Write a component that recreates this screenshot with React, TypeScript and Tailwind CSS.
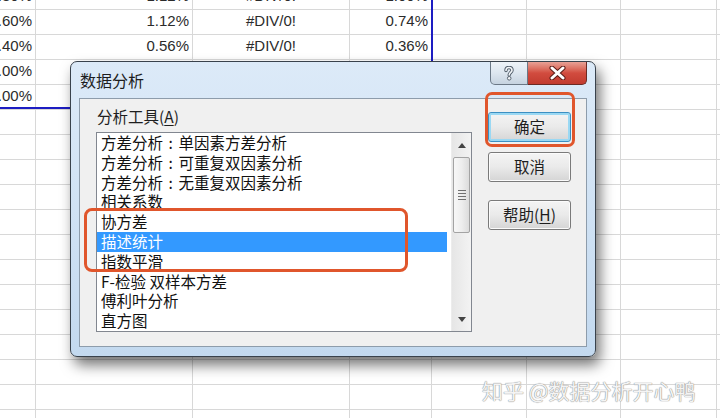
const COLS = [36, 157, 157, 82, 95, 94, 96, 40];

const SHEET: string[][] = [
  ["1.80%", "1.12%", "#DIV/0!", "1.00%"],
  ["1.60%", "1.12%", "#DIV/0!", "0.74%"],
  ["1.40%", "0.56%", "#DIV/0!", "0.36%"],
  ["1.00%", "0.00%", "#DIV/0!", "0.00%"],
  ["1.00%", "0.00%", "#DIV/0!", "0.00%"],
];

const TOOLS = [
  "方差分析：单因素方差分析",
  "方差分析：可重复双因素分析",
  "方差分析：无重复双因素分析",
  "相关系数",
  "协方差",
  "描述统计",
  "指数平滑",
  "F-检验 双样本方差",
  "傅利叶分析",
  "直方图",
];

const cjk = "font-['Noto_Sans_CJK_SC','Noto_Sans',sans-serif]";

function Sheet() {
  const rows = Array.from({ length: 18 }, (_, r) => SHEET[r] ?? []);
  return (
    <div className="-mt-[15px] font-['Liberation_Sans',Arial,sans-serif] text-[15px] text-[#2b2b2b]">
      {rows.map((row, r) => (
        <div key={r} className="flex">
          {COLS.map((w, c) => (
            <div
              key={c}
              style={{ width: w }}
              className={`h-[25px] shrink-0 border-b border-r border-[#d8d8d8] flex items-end pb-[2px] px-[3px] whitespace-nowrap overflow-hidden ${
                c === 2 ? "justify-center" : "justify-end"
              }`}
            >
              {row[c] ?? ""}
            </div>
          ))}
        </div>
      ))}
    </div>
  );
}

function CloseGlyph() {
  return (
    <svg width="17" height="14" viewBox="0 0 17 14">
      <path d="M3 2 L14 12 M14 2 L3 12" stroke="#5a1c16" strokeWidth="5" strokeLinecap="round" />
      <path d="M3 2 L14 12 M14 2 L3 12" stroke="#ffffff" strokeWidth="3" strokeLinecap="round" />
    </svg>
  );
}

function HelpGlyph() {
  return (
    <svg width="10" height="15" viewBox="0 0 10 15">
      <path
        d="M2 4.5 C2 2.5 3.5 1.5 5 1.5 C6.8 1.5 8 2.6 8 4.2 C8 6.3 5.2 6.6 5.2 9"
        fill="none"
        stroke="#4f5b68"
        strokeWidth="3.4"
        strokeLinecap="round"
      />
      <path
        d="M2 4.5 C2 2.5 3.5 1.5 5 1.5 C6.8 1.5 8 2.6 8 4.2 C8 6.3 5.2 6.6 5.2 9"
        fill="none"
        stroke="#f2f5f8"
        strokeWidth="1.6"
        strokeLinecap="round"
      />
      <circle cx="5.2" cy="12.3" r="1.8" fill="#f2f5f8" stroke="#4f5b68" strokeWidth="0.9" />
    </svg>
  );
}

// full-width colon centred in its cell, as the Windows font draws it
function ToolLabel({ text }: { text: string }) {
  const parts = text.split("：");
  if (parts.length < 2) return <>{text}</>;
  return (
    <>
      {parts[0]}
      <span className="inline-block w-[1em] text-center">:</span>
      {parts[1]}
    </>
  );
}

function Btn({ children, focused }: { children: React.ReactNode; focused?: boolean }) {
  return (
    <div
      className={`w-[83px] h-[30px] rounded-[3px] border flex items-center justify-center text-[15.5px] text-[#1e1e1e] bg-gradient-to-b from-[#f4f4f4] via-[#eaeaea] to-[#d5d5d5] ${
        focused
          ? "border-[#3c8fc2] shadow-[inset_0_0_0_2px_#9ad8f3]"
          : "border-[#7a7a7a] shadow-[inset_0_0_0_1px_#fbfbfb]"
      }`}
    >
      {children}
    </div>
  );
}

function ListBox() {
  return (
    <div className="w-[376px] h-[200px] border border-[#828790] bg-white flex">
      <div className="flex-1 pr-[4px]">
        {TOOLS.map((t, i) => (
          <div
            key={t}
            className={`h-[19.8px] leading-[19.8px] pl-[4px] text-[15.5px] whitespace-nowrap ${
              i === 5 ? "bg-[#3399ff] text-white" : "text-[#111]"
            }`}
          >
            <ToolLabel text={t} />
          </div>
        ))}
      </div>
      {/* scrollbar */}
      <div className="w-[20px] flex flex-col bg-gradient-to-r from-[#e6e6e6] to-[#f3f3f3] border-l border-[#ececec]">
        <div className="h-[24px] flex items-center justify-center">
          <svg width="8" height="5" viewBox="0 0 8 5">
            <path d="M0 5 L4 0 L8 5 Z" fill="#444" />
          </svg>
        </div>
        <div className="h-[76px] mx-[1px] rounded-[2px] border border-[#a3a3a3] bg-gradient-to-r from-[#f7f7f7] via-[#eeeeee] to-[#dcdcdc] flex flex-col items-center justify-center gap-[2px]">
          {[0, 1, 2, 3].map((k) => (
            <div key={k} className="w-[8px] h-[1px] bg-[#707070]" />
          ))}
        </div>
        <div className="flex-1" />
        <div className="h-[24px] flex items-center justify-center">
          <svg width="8" height="5" viewBox="0 0 8 5">
            <path d="M0 0 L4 5 L8 0 Z" fill="#444" />
          </svg>
        </div>
      </div>
    </div>
  );
}

function Dialog() {
  return (
    <div
      className={`absolute left-[70px] top-[61px] w-[526px] h-[296px] rounded-[7px] border border-[#39424c] bg-gradient-to-b from-[#dceaf8] via-[#d0e2f4] to-[#c3d9ef] shadow-[4px_8px_14px_rgba(0,0,0,0.55)] flex flex-col ${cjk}`}
    >
      {/* title bar */}
      <div className="h-[36px] flex justify-between pl-[9px] pr-[8px]">
        <div className="self-center text-[16px] text-[#1e1e1e]">数据分析</div>
        <div className="flex items-start">
          <div className="w-[38px] h-[23px] rounded-bl-[5px] border border-t-0 border-[#6b7886] bg-gradient-to-b from-[#eef3f8] via-[#dde6ef] to-[#c6d3e0] flex items-center justify-center">
            <HelpGlyph />
          </div>
          <div className="w-[59px] h-[23px] rounded-br-[5px] border border-t-0 border-l-0 border-[#6b2a24] bg-gradient-to-b from-[#e7a196] via-[#d24c3f] to-[#c13b2f] flex items-center justify-center">
            <CloseGlyph />
          </div>
        </div>
      </div>
      {/* client area */}
      <div className="flex-1 mx-[8px] mb-[9px] border border-[#8d9cab] bg-[#f0f0f0] flex pl-[16px] pt-[8px]">
        <div className="flex flex-col">
          <div className="h-[18px] leading-[18px] pl-[1px] text-[15.5px] text-[#1e1e1e]">
            分析工具(<span className="underline underline-offset-2">A</span>)
          </div>
          <div className="mt-[7px]">
            <ListBox />
          </div>
        </div>
        <div className="ml-[16px] pt-[5px] flex flex-col">
          <Btn focused>确定</Btn>
          <div className="mt-[10px]">
            <Btn>取消</Btn>
          </div>
          <div className="mt-[18px]">
            <Btn>
              帮助(<span className="underline underline-offset-2">H</span>)
            </Btn>
          </div>
        </div>
      </div>
      {/* annotations */}
      <div className="absolute left-[414px] top-[30px] w-[90px] h-[55px] rounded-[7px] border-[3px] border-[#e0562c]" />
      <div className="absolute left-[13px] top-[146px] w-[324px] h-[64px] rounded-[8px] border-[3px] border-[#e0562c]" />
    </div>
  );
}

export default function App() {
  return (
    <div className="relative w-[720px] h-[418px] overflow-hidden bg-white">
      <Sheet />
      {/* selection border */}
      <div className="absolute -left-[2px] -top-[2px] w-[435px] h-[111px] border-r-2 border-b-2 border-[#1d1dc2]" />
      <Dialog />
      <div
        className={`absolute left-[482px] top-[375px] text-[21px] text-[#f4f4f4] whitespace-nowrap [text-shadow:0_0_1px_#8a8a8a,0_0_1px_#8a8a8a] ${cjk}`}
      >
        知乎 @数据分析开心鸭
      </div>
    </div>
  );
}
